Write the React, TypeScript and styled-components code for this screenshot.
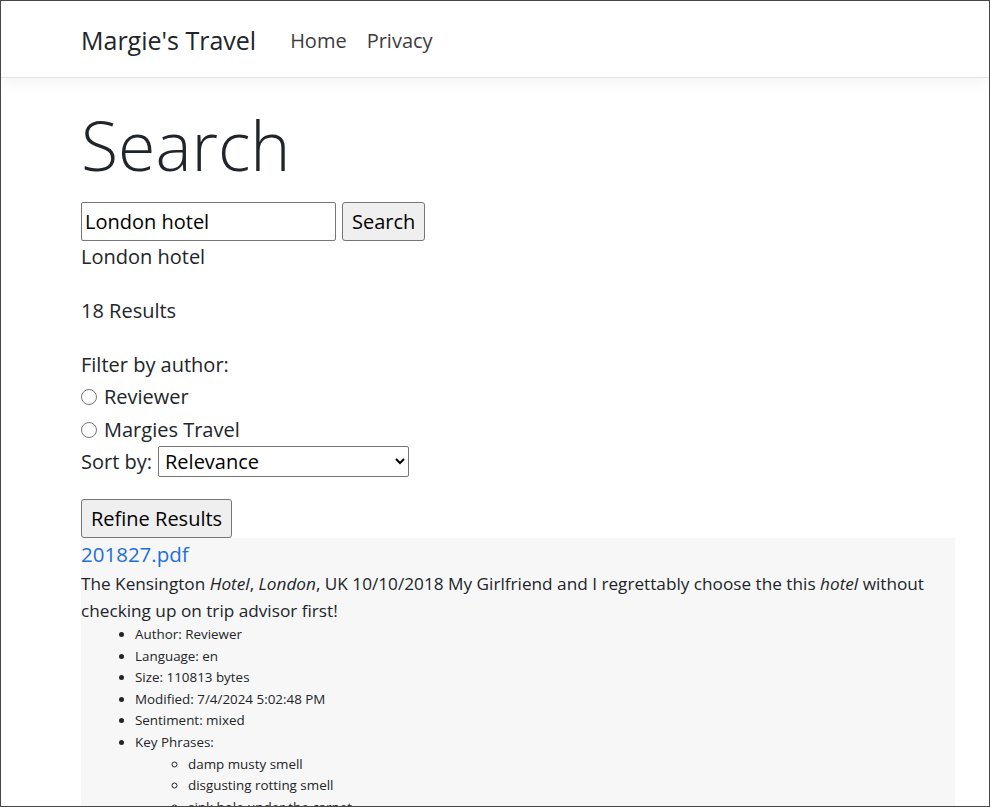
import React, { useState } from "react";
import styled, { createGlobalStyle } from "styled-components";

const GlobalStyle = createGlobalStyle`
  html, body {
    margin: 0;
    padding: 0;
    background: #ffffff;
  }
  body {
    font-family: "Open Sans", "Noto Sans", sans-serif;
    color: #212529;
  }
  * {
    box-sizing: border-box;
  }
`;

const Frame = styled.div`
  width: 990px;
  height: 807px;
  border: 1px solid #474747;
  overflow: hidden;
  background: #ffffff;
`;

const NavBar = styled.header`
  height: 77px;
  border-bottom: 1px solid #dee2e6;
  box-shadow: 0 5px 15px rgba(0, 0, 0, 0.05);
  display: flex;
  align-items: center;
  padding: 2px 0 0 80px;
`;

const Brand = styled.a`
  font-size: 25px;
  color: #212529;
  text-decoration: none;
  margin-right: 24px;
`;

const NavLink = styled.a`
  font-size: 20px;
  color: #3d3d3d;
  text-decoration: none;
  padding: 0 10px;
`;

const Main = styled.main`
  padding: 26px 0 0 80px;
`;

const Title = styled.h1`
  font-size: 68px;
  font-weight: 300;
  line-height: 82px;
  margin: 0 0 16px;
`;

const SearchRow = styled.form`
  display: flex;
  gap: 6px;
  align-items: stretch;
`;

const TextInput = styled.input`
  width: 255px;
  height: 39px;
  font-family: inherit;
  font-size: 20px;
  padding: 0 3px;
  border: 1px solid #767676;
  border-radius: 2px;
  color: #000;
`;

const Button = styled.button`
  height: 39px;
  font-family: inherit;
  font-size: 20px;
  padding: 0 9px;
  background: #efefef;
  border: 1px solid #767676;
  border-radius: 3px;
  color: #000;
`;

const Line = styled.div<{ $gap?: number }>`
  font-size: 20px;
  line-height: 30px;
  margin-bottom: ${(p) => p.$gap ?? 0}px;
`;

const StatusLine = styled(Line)`
  margin-top: 1px;
`;

const RadioRow = styled.label`
  display: flex;
  align-items: center;
  font-size: 20px;
  line-height: 30px;
  height: 33px;
`;

const Radio = styled.input`
  width: 16px;
  height: 16px;
  margin: 0 7px 0 0;
`;

const SortRow = styled.div`
  display: flex;
  align-items: center;
  gap: 6px;
  font-size: 20px;
  line-height: 30px;
  margin-bottom: 22px;
`;

const Select = styled.select`
  width: 251px;
  height: 31px;
  font-family: inherit;
  font-size: 20px;
  border: 1px solid #767676;
  border-radius: 2px;
  background: #fff;
  color: #000;
  padding: 0 2px;
`;

const Result = styled.section`
  width: 874px;
  background: #f7f7f7;
  min-height: 300px;
`;

const ResultLink = styled.a`
  display: block;
  font-size: 20.5px;
  line-height: 32px;
  color: #1e6fd9;
  text-decoration: none;
`;

const Snippet = styled.p`
  font-size: 17.2px;
  line-height: 27px;
  margin: 0;
  padding-right: 20px;
`;

const Details = styled.ul`
  margin: 0;
  padding-left: 54px;
  font-size: 13.4px;
  line-height: 21.6px;
  color: #212529;
`;

const SubList = styled.ul`
  margin: 0;
  padding-left: 53px;
  list-style: circle;
`;

const phrases = ["damp musty smell", "disgusting rotting smell", "sink hole under the carpet"];

export default function App() {
  const [query, setQuery] = useState("London hotel");
  const [author, setAuthor] = useState("");

  return (
    <Frame>
      <GlobalStyle />
      <NavBar>
        <Brand href="#">Margie's Travel</Brand>
        <NavLink href="#">Home</NavLink>
        <NavLink href="#">Privacy</NavLink>
      </NavBar>
      <Main>
        <Title>Search</Title>
        <SearchRow onSubmit={(e) => e.preventDefault()}>
          <TextInput value={query} onChange={(e) => setQuery(e.target.value)} />
          <Button type="submit">Search</Button>
        </SearchRow>
        <StatusLine $gap={24}>London hotel</StatusLine>
        <Line $gap={24}>18 Results</Line>
        <Line>Filter by author:</Line>
        <RadioRow>
          <Radio type="radio" name="author" checked={author === "Reviewer"} onChange={() => setAuthor("Reviewer")} />
          Reviewer
        </RadioRow>
        <RadioRow>
          <Radio type="radio" name="author" checked={author === "Margies Travel"} onChange={() => setAuthor("Margies Travel")} />
          Margies Travel
        </RadioRow>
        <SortRow>
          Sort by:
          <Select defaultValue="relevance">
            <option value="relevance">Relevance</option>
            <option value="date">Date</option>
            <option value="sentiment">Sentiment</option>
          </Select>
        </SortRow>
        <Button type="button">Refine Results</Button>
        <Result>
          <ResultLink href="#">201827.pdf</ResultLink>
          <Snippet>
            The Kensington <em>Hotel</em>, <em>London</em>, UK 10/10/2018 My Girlfriend and I regrettably choose the this{" "}
            <em>hotel</em> without checking up on trip advisor first!
          </Snippet>
          <Details>
            <li>Author: Reviewer</li>
            <li>Language: en</li>
            <li>Size: 110813 bytes</li>
            <li>Modified: 7/4/2024 5:02:48 PM</li>
            <li>Sentiment: mixed</li>
            <li>
              Key Phrases:
              <SubList>
                {phrases.map((p) => (
                  <li key={p}>{p}</li>
                ))}
              </SubList>
            </li>
          </Details>
        </Result>
      </Main>
    </Frame>
  );
}
